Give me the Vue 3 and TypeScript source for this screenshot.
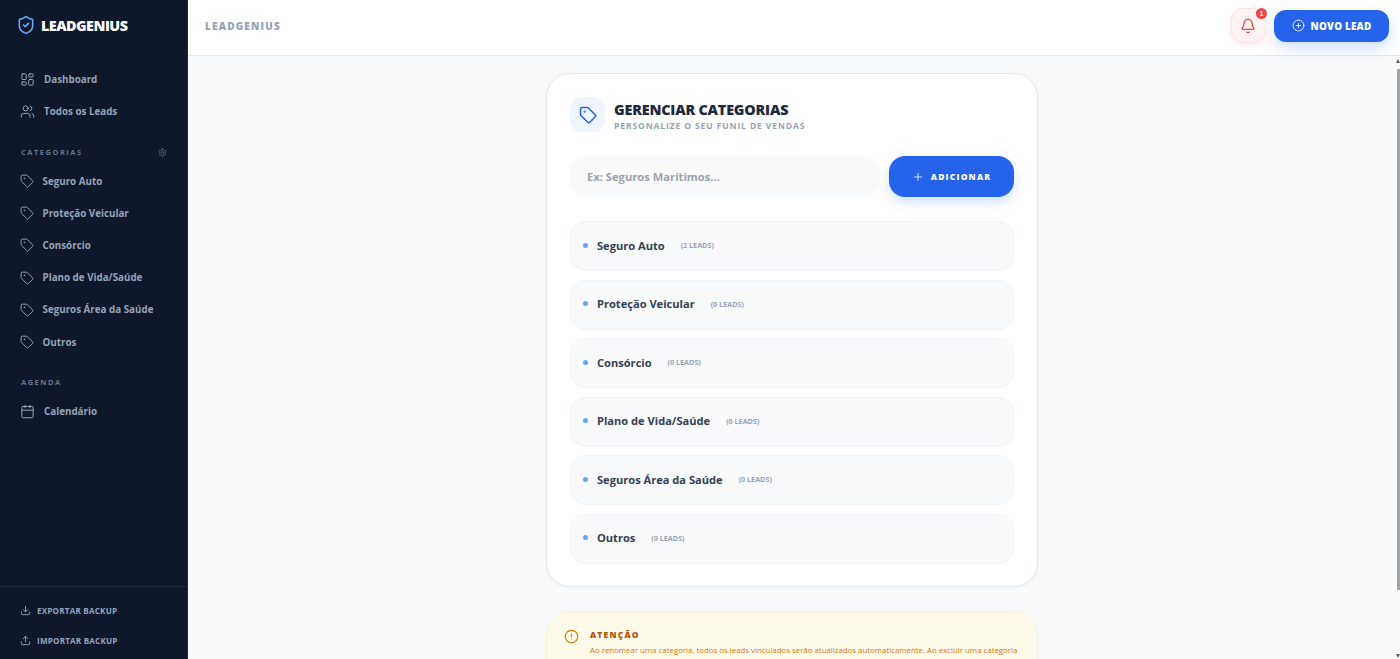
<template>
  <div class="app">
    <aside class="sidebar">
      <div class="brand">
        <svg class="brand__icon" viewBox="0 0 24 24" fill="none" stroke="#60a5fa" stroke-width="2" stroke-linecap="round" stroke-linejoin="round">
          <path d="M20 13c0 5-3.5 7.5-7.66 8.95a1 1 0 0 1-.67-.01C7.5 20.5 4 18 4 13V6a1 1 0 0 1 1-1c2 0 4.5-1.2 6.24-2.72a1.17 1.17 0 0 1 1.52 0C14.51 3.81 17 5 19 5a1 1 0 0 1 1 1z" />
          <path d="m9 12 2 2 4-4" />
        </svg>
        <span>LEADGENIUS</span>
      </div>

      <nav class="nav nav--main">
        <a class="nav__item">
          <svg class="nav__icon" viewBox="0 0 24 24" fill="none" stroke="currentColor" stroke-width="2" stroke-linecap="round" stroke-linejoin="round">
            <rect x="3" y="3" width="7" height="9" rx="1" />
            <rect x="14" y="3" width="7" height="5" rx="1" />
            <rect x="14" y="12" width="7" height="9" rx="1" />
            <rect x="3" y="16" width="7" height="5" rx="1" />
          </svg>
          Dashboard
        </a>
        <a class="nav__item">
          <svg class="nav__icon" viewBox="0 0 24 24" fill="none" stroke="currentColor" stroke-width="2" stroke-linecap="round" stroke-linejoin="round">
            <path d="M16 21v-2a4 4 0 0 0-4-4H6a4 4 0 0 0-4 4v2" />
            <circle cx="9" cy="7" r="4" />
            <path d="M22 21v-2a4 4 0 0 0-3-3.87" />
            <path d="M16 3.13a4 4 0 0 1 0 7.75" />
          </svg>
          Todos os Leads
        </a>
      </nav>

      <div class="section-title section-title--cat">
        <span>CATEGORIAS</span>
        <svg class="section-title__gear" viewBox="0 0 24 24" fill="none" stroke="currentColor" stroke-width="2" stroke-linecap="round" stroke-linejoin="round">
          <path d="M12.22 2h-.44a2 2 0 0 0-2 2v.18a2 2 0 0 1-1 1.73l-.43.25a2 2 0 0 1-2 0l-.15-.08a2 2 0 0 0-2.73.73l-.22.38a2 2 0 0 0 .73 2.73l.15.1a2 2 0 0 1 1 1.72v.51a2 2 0 0 1-1 1.74l-.15.09a2 2 0 0 0-.73 2.73l.22.38a2 2 0 0 0 2.73.73l.15-.08a2 2 0 0 1 2 0l.43.25a2 2 0 0 1 1 1.73V20a2 2 0 0 0 2 2h.44a2 2 0 0 0 2-2v-.18a2 2 0 0 1 1-1.73l.43-.25a2 2 0 0 1 2 0l.15.08a2 2 0 0 0 2.73-.73l.22-.39a2 2 0 0 0-.73-2.73l-.15-.08a2 2 0 0 1-1-1.74v-.5a2 2 0 0 1 1-1.74l.15-.09a2 2 0 0 0 .73-2.73l-.22-.38a2 2 0 0 0-2.73-.73l-.15.08a2 2 0 0 1-2 0l-.43-.25a2 2 0 0 1-1-1.73V4a2 2 0 0 0-2-2z" />
          <circle cx="12" cy="12" r="3" />
        </svg>
      </div>
      <nav class="nav">
        <a v-for="cat in categories" :key="cat.name" class="nav__item nav__item--cat">
          <svg class="nav__icon nav__icon--tag" viewBox="0 0 24 24" fill="none" stroke="currentColor" stroke-width="2" stroke-linecap="round" stroke-linejoin="round">
            <path d="M12.586 2.586A2 2 0 0 0 11.172 2H4a2 2 0 0 0-2 2v7.172a2 2 0 0 0 .586 1.414l8.704 8.704a2.426 2.426 0 0 0 3.42 0l6.58-6.58a2.426 2.426 0 0 0 0-3.42z" />
            <circle cx="7.5" cy="7.5" r=".5" fill="currentColor" />
          </svg>
          {{ cat.name }}
        </a>
      </nav>

      <div class="section-title section-title--agenda"><span>AGENDA</span></div>
      <nav class="nav">
        <a class="nav__item">
          <svg class="nav__icon" viewBox="0 0 24 24" fill="none" stroke="currentColor" stroke-width="2" stroke-linecap="round" stroke-linejoin="round">
            <path d="M8 2v4" />
            <path d="M16 2v4" />
            <rect x="3" y="4" width="18" height="18" rx="2" />
            <path d="M3 10h18" />
          </svg>
          Calendário
        </a>
      </nav>

      <div class="backup">
        <a class="backup__item">
          <svg viewBox="0 0 24 24" fill="none" stroke="currentColor" stroke-width="2" stroke-linecap="round" stroke-linejoin="round">
            <path d="M21 15v4a2 2 0 0 1-2 2H5a2 2 0 0 1-2-2v-4" />
            <path d="m7 10 5 5 5-5" />
            <path d="M12 15V3" />
          </svg>
          EXPORTAR BACKUP
        </a>
        <a class="backup__item">
          <svg viewBox="0 0 24 24" fill="none" stroke="currentColor" stroke-width="2" stroke-linecap="round" stroke-linejoin="round">
            <path d="M21 15v4a2 2 0 0 1-2 2H5a2 2 0 0 1-2-2v-4" />
            <path d="m17 8-5-5-5 5" />
            <path d="M12 3v12" />
          </svg>
          IMPORTAR BACKUP
        </a>
      </div>
    </aside>

    <div class="content">
      <header class="topbar">
        <span class="topbar__title">LEADGENIUS</span>
        <div class="topbar__actions">
          <button class="bell">
            <svg viewBox="0 0 24 24" fill="none" stroke="currentColor" stroke-width="2" stroke-linecap="round" stroke-linejoin="round">
              <path d="M10.268 21a2 2 0 0 0 3.464 0" />
              <path d="M3.262 15.326A1 1 0 0 0 4 17h16a1 1 0 0 0 .74-1.673C19.41 13.956 18 12.499 18 8A6 6 0 0 0 6 8c0 4.499-1.411 5.956-2.738 7.326" />
            </svg>
            <span class="bell__badge">1</span>
          </button>
          <button class="new-lead">
            <svg viewBox="0 0 24 24" fill="none" stroke="currentColor" stroke-width="2" stroke-linecap="round" stroke-linejoin="round">
              <circle cx="12" cy="12" r="10" />
              <path d="M8 12h8" />
              <path d="M12 8v8" />
            </svg>
            NOVO LEAD
          </button>
        </div>
      </header>

      <div class="scroll">
        <main class="main">
          <section class="card">
            <div class="card__head">
              <div class="card__icon">
                <svg viewBox="0 0 24 24" fill="none" stroke="currentColor" stroke-width="2" stroke-linecap="round" stroke-linejoin="round">
                  <path d="M12.586 2.586A2 2 0 0 0 11.172 2H4a2 2 0 0 0-2 2v7.172a2 2 0 0 0 .586 1.414l8.704 8.704a2.426 2.426 0 0 0 3.42 0l6.58-6.58a2.426 2.426 0 0 0 0-3.42z" />
                  <circle cx="7.5" cy="7.5" r=".5" fill="currentColor" />
                </svg>
              </div>
              <div class="card__heading">
                <h1 class="card__title">GERENCIAR CATEGORIAS</h1>
                <p class="card__sub">PERSONALIZE O SEU FUNIL DE VENDAS</p>
              </div>
            </div>

            <div class="add-row">
              <input class="add-row__input" type="text" placeholder="Ex: Seguros Marítimos..." />
              <button class="add-row__btn">
                <svg viewBox="0 0 24 24" fill="none" stroke="currentColor" stroke-width="2" stroke-linecap="round" stroke-linejoin="round">
                  <path d="M5 12h14" />
                  <path d="M12 5v14" />
                </svg>
                ADICIONAR
              </button>
            </div>

            <ul class="cat-list">
              <li v-for="cat in categories" :key="cat.name" class="cat-list__row">
                <span class="cat-list__dot"></span>
                <span class="cat-list__name">{{ cat.name }}</span>
                <span class="cat-list__count">({{ cat.leads }} LEADS)</span>
              </li>
            </ul>
          </section>

          <section class="notice">
            <svg class="notice__icon" viewBox="0 0 24 24" fill="none" stroke="currentColor" stroke-width="2" stroke-linecap="round" stroke-linejoin="round">
              <circle cx="12" cy="12" r="10" />
              <path d="M12 8v4" />
              <path d="M12 16h.01" />
            </svg>
            <div>
              <h2 class="notice__title">ATENÇÃO</h2>
              <p class="notice__text">
                Ao renomear uma categoria, todos os leads vinculados serão atualizados automaticamente. Ao excluir uma categoria
                os leads vinculados serão movidos para a categoria Outros.
              </p>
            </div>
          </section>
        </main>
        <div class="scroll__bar">
          <span class="scroll__arrow"></span>
          <span class="scroll__thumb"></span>
          <span class="scroll__arrow scroll__arrow--down"></span>
        </div>
      </div>
    </div>
  </div>
</template>

<script setup lang="ts">
interface Category {
  name: string
  leads: number
}

const categories: Category[] = [
  { name: 'Seguro Auto', leads: 2 },
  { name: 'Proteção Veicular', leads: 0 },
  { name: 'Consórcio', leads: 0 },
  { name: 'Plano de Vida/Saúde', leads: 0 },
  { name: 'Seguros Área da Saúde', leads: 0 },
  { name: 'Outros', leads: 0 }
]
</script>

<style>
html,
body {
  margin: 0;
  height: 100%;
  overflow: hidden;
}
</style>

<style scoped>
.app {
  display: flex;
  height: 659px;
  font-family: "Open Sans", "Noto Sans", sans-serif;
  background: #f8fafc;
}
.sidebar {
  box-sizing: border-box;
  flex: 0 0 188px;
  height: 659px;
  display: flex;
  flex-direction: column;
  background: #0f172a;
  border-right: 1px solid #1e293b;
  color: #94a3b8;
}
.brand {
  display: flex;
  align-items: center;
  gap: 5px;
  height: 50px;
  padding-left: 16px;
  color: #fff;
  font-size: 14.3px;
  font-weight: 800;
  letter-spacing: -0.5px;
}
.brand__icon {
  width: 20px;
  height: 20px;
}
.nav {
  display: flex;
  flex-direction: column;
}
.nav--main {
  margin-top: 13px;
}
.nav__item {
  display: flex;
  align-items: center;
  gap: 9px;
  height: 32px;
  padding-left: 20px;
  font-size: 9.8px;
  font-weight: 700;
}
.nav__item--cat {
  height: 32.2px;
  gap: 8.5px;
}
.nav__icon {
  width: 15px;
  height: 15px;
  stroke-width: 1.6;
}
.nav__icon--tag {
  width: 14px;
  height: 14px;
}
.section-title {
  display: flex;
  align-items: center;
  justify-content: space-between;
  padding: 0 20px 0 21px;
  color: #64748b;
  font-size: 7.5px;
  font-weight: 700;
  letter-spacing: 1.5px;
}
.section-title--cat {
  margin-top: 19px;
  margin-bottom: 7px;
  height: 12px;
}
.section-title--agenda {
  margin-top: 18px;
  margin-bottom: 7px;
  height: 12px;
}
.section-title__gear {
  width: 9px;
  height: 9px;
}
.backup {
  margin-top: auto;
  display: flex;
  flex-direction: column;
  gap: 10px;
  border-top: 1px solid #1e293b;
  padding: 13px 20px 9px;
}
.backup__item {
  display: flex;
  align-items: center;
  gap: 6px;
  height: 20px;
  font-size: 8.1px;
  font-weight: 700;
  letter-spacing: 0.2px;
}
.backup__item svg {
  width: 11px;
  height: 11px;
}
.content {
  flex: 1;
  min-width: 0;
  display: flex;
  flex-direction: column;
  height: 659px;
}
.topbar {
  box-sizing: border-box;
  flex: 0 0 56px;
  display: flex;
  align-items: center;
  justify-content: space-between;
  padding: 0 11px 4px 17px;
  background: #fff;
  border-bottom: 1px solid #e2e8f0;
  position: relative;
  z-index: 1;
}
.topbar__title {
  color: #94a3b8;
  font-size: 10px;
  font-weight: 800;
  letter-spacing: 1.2px;
}
.topbar__actions {
  display: flex;
  align-items: center;
  gap: 8px;
}
.bell {
  position: relative;
  width: 35px;
  height: 35px;
  padding: 0 1px 0 0;
  border: 1px solid #fee2e2;
  border-radius: 12px;
  background: #fef2f2;
  color: #ef4444;
  box-shadow: 0 2px 6px rgba(254, 226, 226, 0.7);
  display: flex;
  align-items: center;
  justify-content: center;
}
.bell svg {
  width: 16px;
  height: 16px;
}
.bell__badge {
  position: absolute;
  top: -1px;
  right: -2px;
  width: 11px;
  height: 11px;
  border-radius: 50%;
  background: #ef4444;
  color: #fff;
  font-size: 7px;
  font-weight: 800;
  line-height: 11px;
  text-align: center;
}
.new-lead {
  display: flex;
  align-items: center;
  justify-content: center;
  gap: 6px;
  width: 115px;
  height: 32px;
  padding: 0;
  border: none;
  border-radius: 12px;
  background: #2563eb;
  color: #fff;
  font-family: inherit;
  font-size: 9.9px;
  font-weight: 800;
  letter-spacing: 0.2px;
  box-shadow: 0 6px 14px rgba(59, 130, 246, 0.25);
}
.new-lead svg {
  width: 13px;
  height: 13px;
  stroke-width: 1.6;
}
.scroll {
  position: relative;
  flex: 1;
  min-height: 0;
  display: flex;
  padding-right: 4px;
  overflow: hidden;
}
.main {
  flex: 1;
  min-width: 0;
  display: flex;
  flex-direction: column;
  align-items: center;
  gap: 24px;
  padding-top: 17px;
}
.scroll__bar {
  position: absolute;
  top: 0;
  right: 0;
  bottom: 0;
  width: 4px;
  background: #f8fafc;
}
.scroll__arrow {
  position: absolute;
  top: 3px;
  right: 0;
  width: 0;
  height: 0;
  border-left: 2px solid transparent;
  border-right: 2px solid transparent;
  border-bottom: 4px solid #606060;
}
.scroll__arrow--down {
  top: auto;
  bottom: 1px;
  border-bottom: none;
  border-top: 4px solid #606060;
}
.scroll__thumb {
  position: absolute;
  top: 13px;
  right: 0;
  bottom: 69px;
  width: 3px;
  background: #a3a3a3;
}
.card {
  box-sizing: border-box;
  flex: none;
  width: 492px;
  height: 514px;
  padding: 23px;
  background: #fff;
  border: 1px solid #e2e8f0;
  border-radius: 24px;
  box-shadow: 0 1px 3px rgba(15, 23, 42, 0.04);
}
.card__head {
  display: flex;
  align-items: center;
  gap: 9px;
}
.card__heading {
  padding-top: 3px;
}
.card__icon {
  display: flex;
  align-items: center;
  justify-content: center;
  width: 35px;
  height: 35px;
  border-radius: 12px;
  background: #eff6ff;
  color: #2563eb;
}
.card__icon svg {
  width: 18px;
  height: 18px;
}
.card__title {
  margin: 0;
  color: #1e293b;
  font-size: 14.4px;
  font-weight: 800;
  line-height: 16px;
  letter-spacing: -0.2px;
}
.card__sub {
  margin: 2px 0 0;
  color: #94a3b8;
  font-size: 8.5px;
  font-weight: 700;
  line-height: 11px;
  letter-spacing: 0.9px;
}
.add-row {
  display: flex;
  gap: 9px;
  margin-top: 24px;
}
.add-row__input {
  box-sizing: border-box;
  flex: 1;
  min-width: 0;
  height: 41px;
  padding: 0 16px;
  border: 1px solid #f8fafc;
  border-radius: 16px;
  background: #f8fafc;
  font-family: inherit;
  font-size: 11.2px;
  font-weight: 700;
  outline: none;
}
.add-row__input::placeholder {
  color: #9ca3af;
  opacity: 1;
}
.add-row__btn {
  display: flex;
  align-items: center;
  justify-content: center;
  gap: 7px;
  flex: 0 0 125px;
  height: 41px;
  padding: 0;
  border: none;
  border-radius: 16px;
  background: #2563eb;
  color: #fff;
  font-family: inherit;
  font-size: 8.5px;
  font-weight: 800;
  letter-spacing: 1.2px;
  box-shadow: 0 6px 12px rgba(59, 130, 246, 0.22);
}
.add-row__btn svg {
  width: 12px;
  height: 12px;
  stroke-width: 1.6;
}
.cat-list {
  list-style: none;
  margin: 24px 0 0;
  padding: 0;
  display: flex;
  flex-direction: column;
  gap: 8.6px;
}
.cat-list__row {
  box-sizing: border-box;
  display: flex;
  align-items: center;
  height: 50px;
  padding: 0 12px 2px;
  border: 1px solid #f1f5f9;
  border-radius: 16px;
  background: #f8fafc;
}
.cat-list__dot {
  width: 5px;
  height: 5px;
  border-radius: 50%;
  background: #60a5fa;
  margin-right: 9px;
}
.cat-list__name {
  color: #334155;
  font-size: 11.1px;
  font-weight: 700;
}
.cat-list__count {
  margin-left: 16px;
  color: #94a3b8;
  font-size: 7.2px;
  font-weight: 700;
}
.notice {
  box-sizing: border-box;
  flex: none;
  display: flex;
  gap: 11px;
  width: 492px;
  padding: 16px 17px;
  background: #fffbeb;
  border: 1px solid #fef3c7;
  border-radius: 24px;
}
.notice__icon {
  flex: none;
  width: 15px;
  height: 15px;
  margin-top: 1px;
  color: #d97706;
}
.notice__title {
  margin: 0;
  color: #b45309;
  font-size: 8.5px;
  font-weight: 800;
  line-height: 14px;
  letter-spacing: 1.2px;
}
.notice__text {
  margin: 2px 0 0;
  color: #d97706;
  font-size: 7.85px;
  font-weight: 500;
  line-height: 13px;
}
</style>
